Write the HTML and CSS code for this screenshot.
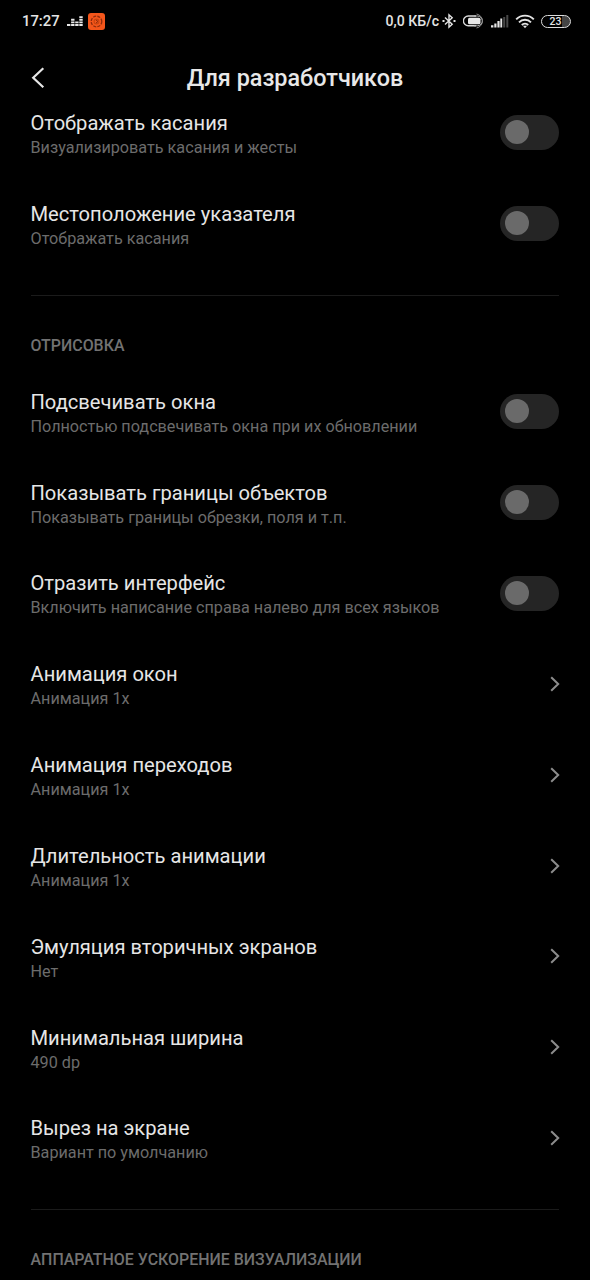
FILE: index.html
```html
<!DOCTYPE html>
<html lang="ru">
<head>
<meta charset="utf-8">
<title>Для разработчиков</title>
<link rel="stylesheet" href="styles.css">
</head>
<body>
<div class="screen">
  <div class="status">
    <span class="clock">17:27</span>
    <svg class="eq" width="16" height="12" viewBox="0 0 16 12" fill="#e8e8e8"><path d="M0 9h3.400v1.900H0zM4.100 9h3.400v1.900H4.100zM8.200 9h3.400v1.900H8.200zM12.300 9h3.400v1.900h-3.400zM4.100 6.400h3.400v1.900H4.100zM8.200 6.400h3.400v1.900H8.200zM12.300 6.400h3.400v1.900h-3.400zM4.100 3.800h3.400v1.900H4.100zM12.300 3.800h3.400v1.900h-3.400zM12.300 1.200h3.400v1.900h-3.400z"/></svg>
    <svg class="app" width="17" height="17" viewBox="0 0 17 17" fill="none"><rect width="17" height="17" rx="3" fill="#f4561b"/><circle cx="8.500" cy="8.500" r="5.300" stroke="#8e2b0d" stroke-width="1.300" stroke-dasharray="3 1.200"/><circle cx="8.500" cy="8.500" r="2.400" stroke="#c8450f" stroke-width="1.100"/><path d="M8 7l2 1.500L8 10" stroke="#8e2b0d"/></svg>
    <span class="net">0,0 КБ/с</span>
    <svg class="bt" width="14" height="16" viewBox="0 0 14 16" fill="none" stroke="#e4e4e4" stroke-width="1.400"><path d="M3 4.500l7.200 6.700L7 14.200V1.800l3.200 3L3 11.500"/><path d="M.5 8h2M11.500 8h2" stroke-width="1.800"/></svg>
    <svg class="batt" width="22" height="16" viewBox="0 0 22 16" fill="none" stroke="#d8d8d8"><path d="M13 3H5.300a4.800 4.800 0 0 0 0 9.800H13" stroke-width="1.400"/><rect x="5" y="4.700" width="12.500" height="6.600" rx="1.500" fill="#e8e8e8" stroke="none"/><path d="M11 3h3.500a4.900 4.900 0 0 1 0 9.800H11" stroke="#bbb"/><path d="M13.500 1a7.100 7.100 0 0 1 0 14" stroke="#888"/></svg>
    <svg class="sig" width="18" height="14" viewBox="0 0 18 14"><path d="M0 11.300h2.400v2.200H0zM3.300 9.500h2.200v4H3.300zM6.400 7h2.200v6.500H6.400zM9.300 4.500h1.900v9H9.300z" fill="#e4e4e4"/><path d="M12.200 3h2v10.500h-2zM15.300 1h2v12.500h-2z" fill="#484848"/></svg>
    <svg class="wifi" width="20" height="15" viewBox="0 0 20 15" fill="none" stroke="#e4e4e4" stroke-width="1.900"><path d="M1.200 5.300a12.400 12.400 0 0 1 17.600 0M4 8.300a8.400 8.400 0 0 1 12 0M6.800 11a4.500 4.500 0 0 1 6.400 0"/><path d="M7.900 11.800h4.200L10 14.200z" fill="#e4e4e4" stroke="none"/></svg>
    <span class="level">23</span>
  </div>
  <div class="header">
    <svg class="back" width="14" height="22" viewBox="0 0 14 22" fill="none" stroke="#e6e6e6" stroke-width="2.200"><path d="M12.300 1.300L2.200 10.800l10.100 9.500"/></svg>
    <h1>Для разработчиков</h1>
  </div>
  <div class="list">
    <div class="row"><div><p class="name">Отображать касания</p><p class="note">Визуализировать касания и жесты</p></div><span class="switch"></span></div>
    <div class="row"><div><p class="name">Местоположение указателя</p><p class="note">Отображать касания</p></div><span class="switch"></span></div>
  </div>
  <h2>ОТРИСОВКА</h2>
  <div class="list">
    <div class="row"><div><p class="name">Подсвечивать окна</p><p class="note">Полностью подсвечивать окна при их обновлении</p></div><span class="switch"></span></div>
    <div class="row"><div><p class="name">Показывать границы объектов</p><p class="note">Показывать границы обрезки, поля и т.п.</p></div><span class="switch"></span></div>
    <div class="row"><div><p class="name">Отразить интерфейс</p><p class="note">Включить написание справа налево для всех языков</p></div><span class="switch"></span></div>
    <div class="row"><div><p class="name">Анимация окон</p><p class="note">Анимация 1x</p></div><svg class="go" viewBox="0 0 10 16"><path d="M1.200 1.200L8.200 8l-7 6.800"/></svg></div>
    <div class="row"><div><p class="name">Анимация переходов</p><p class="note">Анимация 1x</p></div><svg class="go" viewBox="0 0 10 16"><path d="M1.200 1.200L8.200 8l-7 6.800"/></svg></div>
    <div class="row"><div><p class="name">Длительность анимации</p><p class="note">Анимация 1x</p></div><svg class="go" viewBox="0 0 10 16"><path d="M1.200 1.200L8.200 8l-7 6.800"/></svg></div>
    <div class="row"><div><p class="name">Эмуляция вторичных экранов</p><p class="note">Нет</p></div><svg class="go" viewBox="0 0 10 16"><path d="M1.200 1.200L8.200 8l-7 6.800"/></svg></div>
    <div class="row"><div><p class="name">Минимальная ширина</p><p class="note">490 dp</p></div><svg class="go" viewBox="0 0 10 16"><path d="M1.200 1.200L8.200 8l-7 6.800"/></svg></div>
    <div class="row"><div><p class="name">Вырез на экране</p><p class="note">Вариант по умолчанию</p></div><svg class="go" viewBox="0 0 10 16"><path d="M1.200 1.200L8.200 8l-7 6.800"/></svg></div>
  </div>
  <h2>АППАРАТНОЕ УСКОРЕНИЕ ВИЗУАЛИЗАЦИИ</h2>
</div>
</body>
</html>
```
FILE: styles.css
```css
* { box-sizing: border-box; }
body { margin: 0; background: #000; font-family: Roboto, "Noto Sans", sans-serif; }
.screen { width: 590px; height: 1280px; overflow: hidden; background: #000; }
.status { display: flex; align-items: center; height: 42px; padding: 0 19px 0 22px; color: #e4e4e4; font-weight: 500; }
.clock { font-size: 14.8px; }
.eq { margin-left: 7px; }
.app { margin-left: 5px; }
.net { margin-left: auto; font-size: 14.1px; white-space: nowrap; }
.bt { margin-left: 3px; }
.batt { margin-left: 7px; }
.sig { margin-left: 6px; }
.wifi { margin-left: 6px; }
.level { width: 30px; height: 13px; margin-left: 6px; padding-right: 1px; border: 1.5px solid #dcdcdc; border-radius: 7px; background: linear-gradient(90deg, #000 72%, #444 72%); font-size: 10.5px; line-height: 11px; text-align: center; }
.header { display: flex; align-items: center; height: 72px; margin-bottom: -26.6px; padding: 0 31px; }
.header h1 { flex: 1; margin: 0 14px 0 0; color: #e8e8e8; font-size: 23.4px; font-weight: 500; text-align: center; }
.row { display: flex; align-items: center; justify-content: space-between; height: 90.82px; padding: 0 31px 0 30.5px; }
.row p { margin: 0; white-space: nowrap; }
.row > div { padding-top: 5.8px; }
.name { color: #e6e6e6; font-size: 20.15px; line-height: 25px; }
.note { color: #6c6c6c; font-size: 16.2px; line-height: 24px; }
.switch { width: 59px; height: 35px; padding: 5px; border-radius: 18px; background: #252525; }
.switch::before { content: ""; display: block; width: 24px; height: 24px; border-radius: 50%; background: #6a6a6a; }
.go { width: 10px; height: 16px; margin-right: -1px; fill: none; stroke: #8c8c8c; stroke-width: 2; }
h2 { height: 71px; margin: 26px 31px 0 30.5px; padding-top: 38px; border-top: 1px solid #1b1b1b; color: #727272; font-size: 15.95px; font-weight: 500; line-height: 24px; white-space: nowrap; }
```
